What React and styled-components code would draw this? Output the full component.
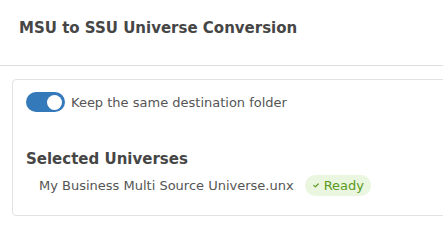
import React from "react";
import styled, { createGlobalStyle } from "styled-components";

const Global = createGlobalStyle`
  html, body { margin: 0; padding: 0; background: #fff; overflow: hidden; }
  body { font-family: "DejaVu Sans", "Noto Sans", sans-serif; color: #4a4a4a; }
  * { box-sizing: border-box; }
`;

const Dialog = styled.div`
  width: 443px;
  height: 245px;
  display: flex;
  flex-direction: column;
  background: #fff;
  overflow: hidden;
`;

const Header = styled.div`
  height: 66px;
  display: flex;
  align-items: flex-start;
  padding: 19px 19px 0;
  border-bottom: 1px solid #dedede;
`;

const Title = styled.h1`
  margin: 0;
  font-size: 15px;
  line-height: 18px;
  font-weight: 700;
  color: #464646;
  white-space: nowrap;
`;

const Body = styled.div`
  padding: 13px 0 0 12px;
`;

const Card = styled.div`
  width: 460px;
  border: 1px solid #e2e2e2;
  border-radius: 4px;
  padding: 12px 13px 19px 13px;
`;

const ToggleRow = styled.label`
  display: flex;
  align-items: center;
  gap: 6px;
  font-size: 13px;
  color: #555;
`;

const Switch = styled.span`
  position: relative;
  width: 39px;
  height: 20px;
  border-radius: 10px;
  background: ${(p) => (p.$on ? "#3479b9" : "#ccc")};
  flex: none;
  &::after {
    content: "";
    position: absolute;
    top: 2.5px;
    left: ${(p) => (p.$on ? "21px" : "3px")};
    width: 15px;
    height: 15px;
    border-radius: 50%;
    background: #fff;
  }
`;

const SectionTitle = styled.h2`
  margin: 38px 0 0 0;
  font-size: 15px;
  line-height: 18px;
  font-weight: 600;
  color: #464646;
`;

const ItemRow = styled.div`
  display: flex;
  align-items: center;
  gap: 11px;
  margin-top: 7px;
  padding-left: 13px;
  font-size: 13px;
  color: #555;
`;

const Badge = styled.span`
  display: inline-flex;
  align-items: center;
  gap: 5px;
  height: 21px;
  padding: 0 7px 0 8px;
  border-radius: 11px;
  background: #eaf6df;
  color: #5b9a21;
  font-size: 13px;
`;

const Check = () => (
  <svg width="6" height="5" viewBox="0 0 6 5" fill="none">
    <path d="M0.8 2.4 L2.4 3.9 L5.2 1" stroke="#5b9a21" strokeWidth="1.2" strokeLinecap="round" strokeLinejoin="round" />
  </svg>
);

export default function App() {
  return (
    <>
      <Global />
      <Dialog>
        <Header>
          <Title>MSU to SSU Universe Conversion</Title>
        </Header>
        <Body>
          <Card>
            <ToggleRow>
              <Switch $on />
              Keep the same destination folder
            </ToggleRow>
            <SectionTitle>Selected Universes</SectionTitle>
            <ItemRow>
              My Business Multi Source Universe.unx
              <Badge>
                <Check />
                Ready
              </Badge>
            </ItemRow>
          </Card>
        </Body>
      </Dialog>
    </>
  );
}
